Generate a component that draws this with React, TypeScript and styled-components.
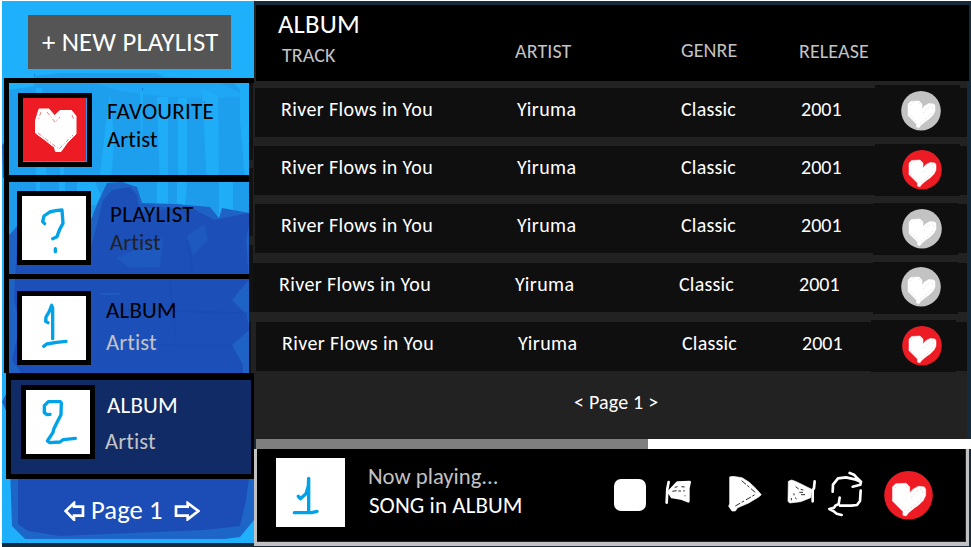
import React from "react";
import styled, { createGlobalStyle } from "styled-components";

const Global = createGlobalStyle`
  * { box-sizing: border-box; }
  body { margin: 0; background: #fff; }
`;

const Page = styled.div`
  width: 971px;
  height: 547px;
  padding: 1px 0 0 2px;
  display: grid;
  grid-template-columns: 252px 717px;
  overflow: hidden;
  background: linear-gradient(#fff 1px, transparent 1px), linear-gradient(90deg, #fff 2px, #152b3b 2px);
  font-family: Carlito, Calibri, Lato, sans-serif;
  font-variant-ligatures: none;
`;

const Label = styled.div<{ $size?: number; $color?: string; $track?: number; $line?: number; $left?: number; $top?: number }>`
  font-size: ${(p) => p.$size ?? 20}px;
  line-height: ${(p) => p.$line ?? 24}px;
  color: ${(p) => p.$color ?? "#fff"};
  letter-spacing: ${(p) => p.$track ?? 0}px;
  margin-left: ${(p) => p.$left ?? 0}px;
  margin-top: ${(p) => p.$top ?? 0}px;
  white-space: nowrap;
`;

/* ---------- Sidebar ---------- */

const Sidebar = styled.aside`
  position: relative;
  height: 542px;
  display: flex;
  flex-direction: column;
  background: #1fb0fb;
`;

const Paint = styled.svg`
  position: absolute;
  inset: 0;
  width: 252px;
  height: 542px;
`;

const SidebarTop = styled.div`
  height: 77px;
  padding: 14px 0 0 26px;
`;

const NewPlaylist = styled.button`
  position: relative;
  width: 203px;
  height: 54px;
  padding: 0 0 0 14px;
  border: 0;
  background: #555;
  font-family: inherit;
  text-align: left;
`;

const Card = styled.div<{ $height: number; $top: number; $bottom?: number; $active?: boolean }>`
  position: relative;
  display: flex;
  flex-shrink: 0;
  height: ${(p) => p.$height}px;
  margin-left: ${(p) => (p.$active ? 4 : 2)}px;
  margin-right: ${(p) => (p.$active ? 0 : 5)}px;
  border-style: solid;
  border-color: #000;
  border-width: ${(p) => p.$top}px ${(p) => (p.$active ? 3 : 0)}px ${(p) => p.$bottom ?? 0}px 5px;
  background: ${(p) => (p.$active ? "#112b66" : "transparent")};
`;

const Tile = styled.div<{ $left: number; $top: number; $fill?: string }>`
  flex-shrink: 0;
  width: 74px;
  height: 74px;
  margin: ${(p) => p.$top}px 0 0 ${(p) => p.$left}px;
  border: 5px solid #000;
  background: ${(p) => p.$fill ?? "#fff"};
  svg { display: block; }
`;

const CardText = styled.div`
  display: flex;
  flex-direction: column;
`;

const Pager = styled.div`
  position: relative;
  display: flex;
  align-items: center;
  height: 28px;
  margin: 17px 0 0 62px;
  svg { margin-top: 1px; }
`;

const PagerLabel = styled.div`
  width: 87px;
  padding-left: 5px;
`;

/* ---------- Main ---------- */

const Main = styled.main`
  display: flex;
  flex-direction: column;
  height: 546px;
`;

const Library = styled.section`
  position: relative;
  height: 438px;
  padding: 4px 2px 0 0;
  background: linear-gradient(#152b3b 4px, transparent 4px), linear-gradient(90deg, #222 713px, #152b3b 713px);
`;

const Head = styled.header`
  height: 76px;
  margin-left: 2px;
  display: grid;
  grid-template-columns: 259px 166px 118px 1fr;
  background: #000;
`;

const Row = styled.div<{ $gap: number; $left: number; $indent: number }>`
  display: grid;
  grid-template-columns: 236px 164px 120px 1fr;
  grid-template-rows: 42px;
  align-items: center;
  height: 49px;
  margin: ${(p) => p.$gap}px 2px 0 ${(p) => p.$left}px;
  padding-left: ${(p) => p.$indent}px;
  background: #0f0f0f;
`;

const Release = styled.div`
  display: flex;
  align-items: flex-start;
  align-self: start;
`;

const Year = styled.div`
  width: 44px;
  padding-top: 9px;
`;

const LikeCell = styled.div<{ $left: number; $rise: number; $pad: number; $drop: number }>`
  height: 52px;
  width: 85px;
  margin: -${(p) => p.$rise}px 0 0 ${(p) => p.$left}px;
  padding: ${(p) => p.$drop}px 0 0 ${(p) => p.$pad}px;
  background: #0f0f0f;
  svg { display: block; }
`;

const PageLabel = styled.div`
  display: flex;
  margin: 19px 0 0 320px;
`;

const Player = styled.section`
  height: 107px;
  display: flex;
  flex-direction: column;
`;

const Progress = styled.div`
  height: 10px;
  margin-left: 2px;
  background: linear-gradient(90deg, #7f7f7f 392px, #fff 392px);
`;

const Deck = styled.div`
  height: 97px;
  display: flex;
  margin-right: 2px;
  padding: 9px 0 0 19px;
  background: #000;
  border: solid #c3c0c3;
  border-width: 0 3px 4px 3px;
  box-shadow: inset -1px -1px #152b3b, inset 0 0 #000;
`;

const Cover = styled.div`
  width: 69px;
  height: 69px;
  background: #fff;
  svg { display: block; }
`;

const NowPlaying = styled.div`
  width: 245px;
  padding: 6px 0 0 23px;
`;

const Controls = styled.div`
  display: flex;
  align-items: flex-start;
`;

const Control = styled.button<{ $left: number; $top: number }>`
  display: block;
  padding: 0;
  border: 0;
  background: none;
  margin: ${(p) => p.$top}px 0 0 ${(p) => p.$left}px;
  svg { display: block; }
`;

const StopShape = styled.span`
  display: block;
  width: 32px;
  height: 32px;
  border-radius: 7px;
  background: #fff;
`;

/* ---------- Drawings ---------- */

const Like = ({ on, size = 40 }: { on?: boolean; size?: number }) => (
  <svg width={size} height={size} viewBox="0 0 40 40">
    <circle cx="20" cy="19.8" r="19.8" fill={on ? "#ed1c24" : "#c3c3c3"} />
    <path d="M7 13 9.5 10.5 18 10 21 13 21 18 23.5 15 28 12.5 33 13 34 15 34 20 32 24 28 28 25 30 20 34 18 36.7 15.5 36 15.5 33 11 28.5 7 24.5Z" fill="#fff" stroke="#fff" strokeWidth=".5" />
    <path d="M8.5 14 12 12M9 24 18 33 25 28 31 22M22 22 26 17 31 14.5 32 19M18 12 19 14" fill="none" stroke="#c3c3c3" strokeWidth=".5" strokeDasharray="1.5 2" />
  </svg>
);

const Stroke = ({ d, box, size = 64, width = 10 }: { d: string; box: string; size?: number; width?: number }) => (
  <svg width={size} height={size} viewBox={box}>
    <path d={d} fill="none" stroke="#00a2e8" strokeWidth={width} strokeLinecap="round" strokeLinejoin="round" />
  </svg>
);

const FavouriteHeart = () => (
  <svg width="64" height="64" viewBox="0 0 64 64">
    <path d="M63.5 0V63.5H0" fill="none" stroke="#1e9bea" />
    <path d="M16 11H26L31.5 17.5 37 12.5H48.5L53 18V36L44 45 38 53.5H32.5L31.5 49.5 22 42 12.5 35V22.5Z" fill="#fff" stroke="#fff" strokeLinejoin="round" />
    <path d="M18 14 15 22M24 14 32 24 37 19M49 17 51 22M15 35 24 42 36 51 50 37" fill="none" stroke="#ed1c24" strokeWidth=".6" strokeDasharray="4 2 1 2" />
  </svg>
);

const SidebarPaint = () => (
  <Paint viewBox="2 1 252 542">
    <path d="M34 76 60 73H155L165 77 230 79 245 95V182H9V90L34 86Z" fill="#1e9fee" />
    <path d="M94 83H220L246 96 215 98 168 97 120 91 112 88Z" fill="#1fa6f5" />
    <path d="M36 88H42L47 182H36ZM110 92 114 140 111 182H99ZM140 92H143L142 160ZM157 97H168V190H160ZM178 98H187V196H178ZM202 88 218 96 219 204H208ZM60 160H64V195H60ZM240 83H249V190H246L240 120Z" fill="#1fadf8" />
    <path d="M9 182H249V215H9Z" fill="#1e9cec" />
    <path d="M36 182H40V192H36ZM59 182H65V192H59ZM77 182H95L103 200 96 205 77 205ZM157 182H168V204H157ZM177 182H187L185 206 177 203ZM219 182H233V213L219 218Z" fill="#1fadf8" />
    <path d="M9 215 14 215 16 205 60 215 90 222 98 202 107 183 122 182 137 187 142 203 175 204 210 207 219 218 222 208 249 213V374H9Z" fill="#1d62c4" />
    <path d="M9 182H36V200L14 230 9 235Z" fill="#1e9cec" />
    <path d="M17 245 28 262 90 250 97 225 103 200 112 190 130 187 137 195 140 212 190 207 214 220 249 213V225L246 240 249 280 240 290 232 300 247 315 249 330 232 345 243 365V374H22L12 360 20 325 14 300Z" fill="#1c50b8" />
    <path d="M116 258 135 250 163 238 160 267 130 268ZM98 293H123L118 295H103ZM187 236 204 224 208 240 193 255Z" fill="#1d59bf" />
    <path d="M140 205 190 212M187 240 193 274M120 310 249 313M170 280 176 340M125 345 230 346" stroke="#1b47ae" strokeWidth="2" opacity=".3" fill="none" />
    <path d="M10 468H254V520L240 537 225 539H25L12 526Z" fill="#1d66c8" />
    <path d="M18 479H249L246 500 240 526 205 530 60 536 28 531 18 524Z" fill="#1c4db6" />
    <path d="M2 145 5 142V178L3 178ZM2 402 8 390V415Z" fill="#1d5fc3" />
    <path d="M249 78H254V83H249Z" fill="#000" />
    <path d="M249 83H254V375H249Z" fill="#121212" />
    <path d="M253 83H254V375H253ZM249 160H254V168H249ZM249 236H254V245H249ZM249 312H254V375H251V322H249Z" fill="#222" />
    <path d="M34 75H35M142 89H143M204 102H205" stroke="#1d4ebd" />
  </Paint>
);

const QUESTION = "M134 161 128 155 132 138 149 126 167 122 186 120 189 160 179 178 171 200 158 206M166 236V245";
const ONE = "M144 128 137 124 138 111 148 94 155 76 158 84V176M131 199 140 192 170 187 198 184";
const TWO = "M150 133 141 134 133 128V107L145 95H181L184 99 183 134 172 155 161 178 159 187 142 213 149 218 180 216 190 209 226 205";
const COVER_ONE = "M160 349 166 356 183 341 190 318 191 295V397M148 398H200L216 394";

const tracks = [
  { gap: 7, left: 1, indent: 26, like: 30, rise: 3, pad: 26, drop: 6, on: false },
  { gap: 9, left: 0, indent: 27, like: 30, rise: 2, pad: 27, drop: 6, on: true },
  { gap: 9, left: 1, indent: 26, like: 28, rise: 1, pad: 29, drop: 6, on: false },
  { gap: 10, left: -1, indent: 26, like: 30, rise: 1, pad: 28, drop: 5, on: false },
  { gap: 10, left: 2, indent: 26, like: 25, rise: 2, pad: 31, drop: 6, on: true },
];

export default function App() {
  return (
    <Page>
      <Global />
      <Sidebar>
        <SidebarPaint />
        <SidebarTop>
          <NewPlaylist>
            <Label $size={26.67} $track={0.2}>+ NEW PLAYLIST</Label>
          </NewPlaylist>
        </SidebarTop>
        <Card $height={97} $top={5}>
          <Tile $left={9} $top={10} $fill="#ed1c24"><FavouriteHeart /></Tile>
          <CardText>
            <Label $size={23} $track={0.2} $color="#000" $left={15} $top={16}>FAVOURITE</Label>
            <Label $size={22.67} $track={0.1} $color="#000" $left={15} $top={4}>Artist</Label>
          </CardText>
        </Card>
        <Card $height={99} $top={7}>
          <Tile $left={8} $top={9}><Stroke d={QUESTION} box="66 78 192 192" /></Tile>
          <CardText>
            <Label $size={23} $track={0.3} $color="#000" $left={19} $top={20}>PLAYLIST</Label>
            <Label $size={22.67} $track={0.1} $color="#222" $left={19} $top={4}>Artist</Label>
          </CardText>
        </Card>
        <Card $height={99} $top={5}>
          <Tile $left={8} $top={12}><Stroke d={ONE} box="66 48 192 192" /></Tile>
          <CardText>
            <Label $size={23} $track={0.2} $color="#000" $left={15} $top={19}>ALBUM</Label>
            <Label $size={22.67} $track={0.1} $color="#c3c3c3" $left={15} $top={8}>Artist</Label>
          </CardText>
        </Card>
        <Card $height={106} $top={7} $bottom={5} $active>
          <Tile $left={10} $top={5}><Stroke d={TWO} box="78 60 192 192" /></Tile>
          <CardText>
            <Label $size={23} $track={0.2} $left={12} $top={13}>ALBUM</Label>
            <Label $size={22.67} $track={0.1} $color="#c3c3c3" $left={10} $top={12}>Artist</Label>
          </CardText>
        </Card>
        <Pager>
          <svg width="22" height="20" viewBox="194 393 66 60"><path d="M199 423 224 399V410H251V437H224V449Z" fill="none" stroke="#fff" strokeWidth="8" /></svg>
          <PagerLabel><Label $size={26.67} $track={0.1}>Page 1</Label></PagerLabel>
          <svg width="27" height="20" viewBox="519 393 81 60"><path d="M528 410H563V399L595 423 563 448V437H528Z" fill="none" stroke="#fff" strokeWidth="8" /></svg>
        </Pager>
      </Sidebar>

      <Main>
        <Library>
          <Head>
            <div>
              <Label $size={26.67} $track={0.2} $line={28} $left={22} $top={5}>ALBUM</Label>
              <Label $color="#c3c3c3" $track={0.1} $left={26} $top={5}>TRACK</Label>
            </div>
            <Label $color="#c3c3c3" $track={0.1} $top={34}>ARTIST</Label>
            <Label $color="#c3c3c3" $track={0.1} $top={33}>GENRE</Label>
            <Label $color="#c3c3c3" $track={0.1} $top={34}>RELEASE</Label>
          </Head>
          {tracks.map((t, i) => (
            <Row key={i} $gap={t.gap} $left={t.left} $indent={t.indent}>
              <Label $track={0.37}>River Flows in You</Label>
              <Label $track={0.4}>Yiruma</Label>
              <Label $track={0.2}>Classic</Label>
              <Release>
                <Year><Label>2001</Label></Year>
                <LikeCell $left={t.like} $rise={t.rise} $pad={t.pad} $drop={t.drop}>
                  <Like on={t.on} />
                </LikeCell>
              </Release>
            </Row>
          ))}
          <PageLabel><Label $track={0.2}>&lt; Page 1 &gt;</Label></PageLabel>
        </Library>
        <Player>
          <Progress />
          <Deck>
            <Cover><Stroke d={COVER_ONE} box="93 234 207 207" size={69} /></Cover>
            <NowPlaying>
              <Label $size={22.67} $color="#c3c3c3">Now playing...</Label>
              <Label $size={23} $track={0.05} $left={1} $top={5}>SONG in ALBUM</Label>
            </NowPlaying>
            <Controls>
              <Control $left={24} $top={21} aria-label="Stop"><StopShape /></Control>
              <Control $left={19} $top={22} aria-label="Previous">
                <svg width="27" height="25" viewBox="225 150 81 75">
                  <path d="M236 156 232 176 230 218M240 181 262 158 299 156 295 175V214L272 205 246 201 239 190Z" fill="none" stroke="#fff" strokeWidth="8" strokeLinejoin="round" strokeLinecap="round" />
                  <path d="M240 183 262 160 296 158V210L246 202Z" fill="#fff" />
                  <path d="M254 172 263 170M274 170 284 171M247 184 260 182M265 183H273M282 180V185M285 196V199" stroke="#000" strokeWidth="2.5" />
                </svg>
              </Control>
              <Control $left={36} $top={18} aria-label="Play">
                <svg width="34" height="36" viewBox="416 137 102 108">
                  <path d="M421 140 430 138 458 142 480 156 500 175 516 193 508 200 478 218 445 232 438 242 428 242 418 228 421 220Z" fill="#fff" stroke="#fff" strokeWidth="2" strokeLinejoin="round" />
                  <path d="M457 151 500 188M438 227 500 191" fill="none" stroke="#000" strokeWidth="2.5" strokeDasharray="17 5 8 7" />
                </svg>
              </Control>
              <Control $left={25} $top={21} aria-label="Next">
                <svg width="31" height="26" viewBox="54 147 93 78">
                  <path d="M58 154 68 150 82 155 128 178 125 203 95 215 62 219 57 214Z" fill="#fff" stroke="#fff" strokeWidth="2" strokeLinejoin="round" />
                  <path d="M137 154 135 174 131 181V214" fill="none" stroke="#fff" strokeWidth="8" strokeLinecap="round" />
                  <path d="M80 170 89 177M95 178 103 180M91 187H102M75 190V196M67 204V211M78 203 83 207M96 194H108" stroke="#000" strokeWidth="2.5" />
                </svg>
              </Control>
              <Control $left={9} $top={13} aria-label="Repeat">
                <svg width="38" height="46" viewBox="171 123 114 138">
                  <path d="M188 185 189 164 204 145 228 142 258 149 272 155M239 129 252 134 262 145 273 155 271 164 248 170M272 182 270 213 261 225 244 227H210M209 203 206 222 196 227 192 233 178 237 190 243 200 251 215 255" fill="none" stroke="#fff" strokeWidth="8" strokeLinecap="round" strokeLinejoin="round" />
                </svg>
              </Control>
              <Control $left={19} $top={13} aria-label="Favourite"><Like on size={49} /></Control>
            </Controls>
          </Deck>
        </Player>
      </Main>
    </Page>
  );
}
